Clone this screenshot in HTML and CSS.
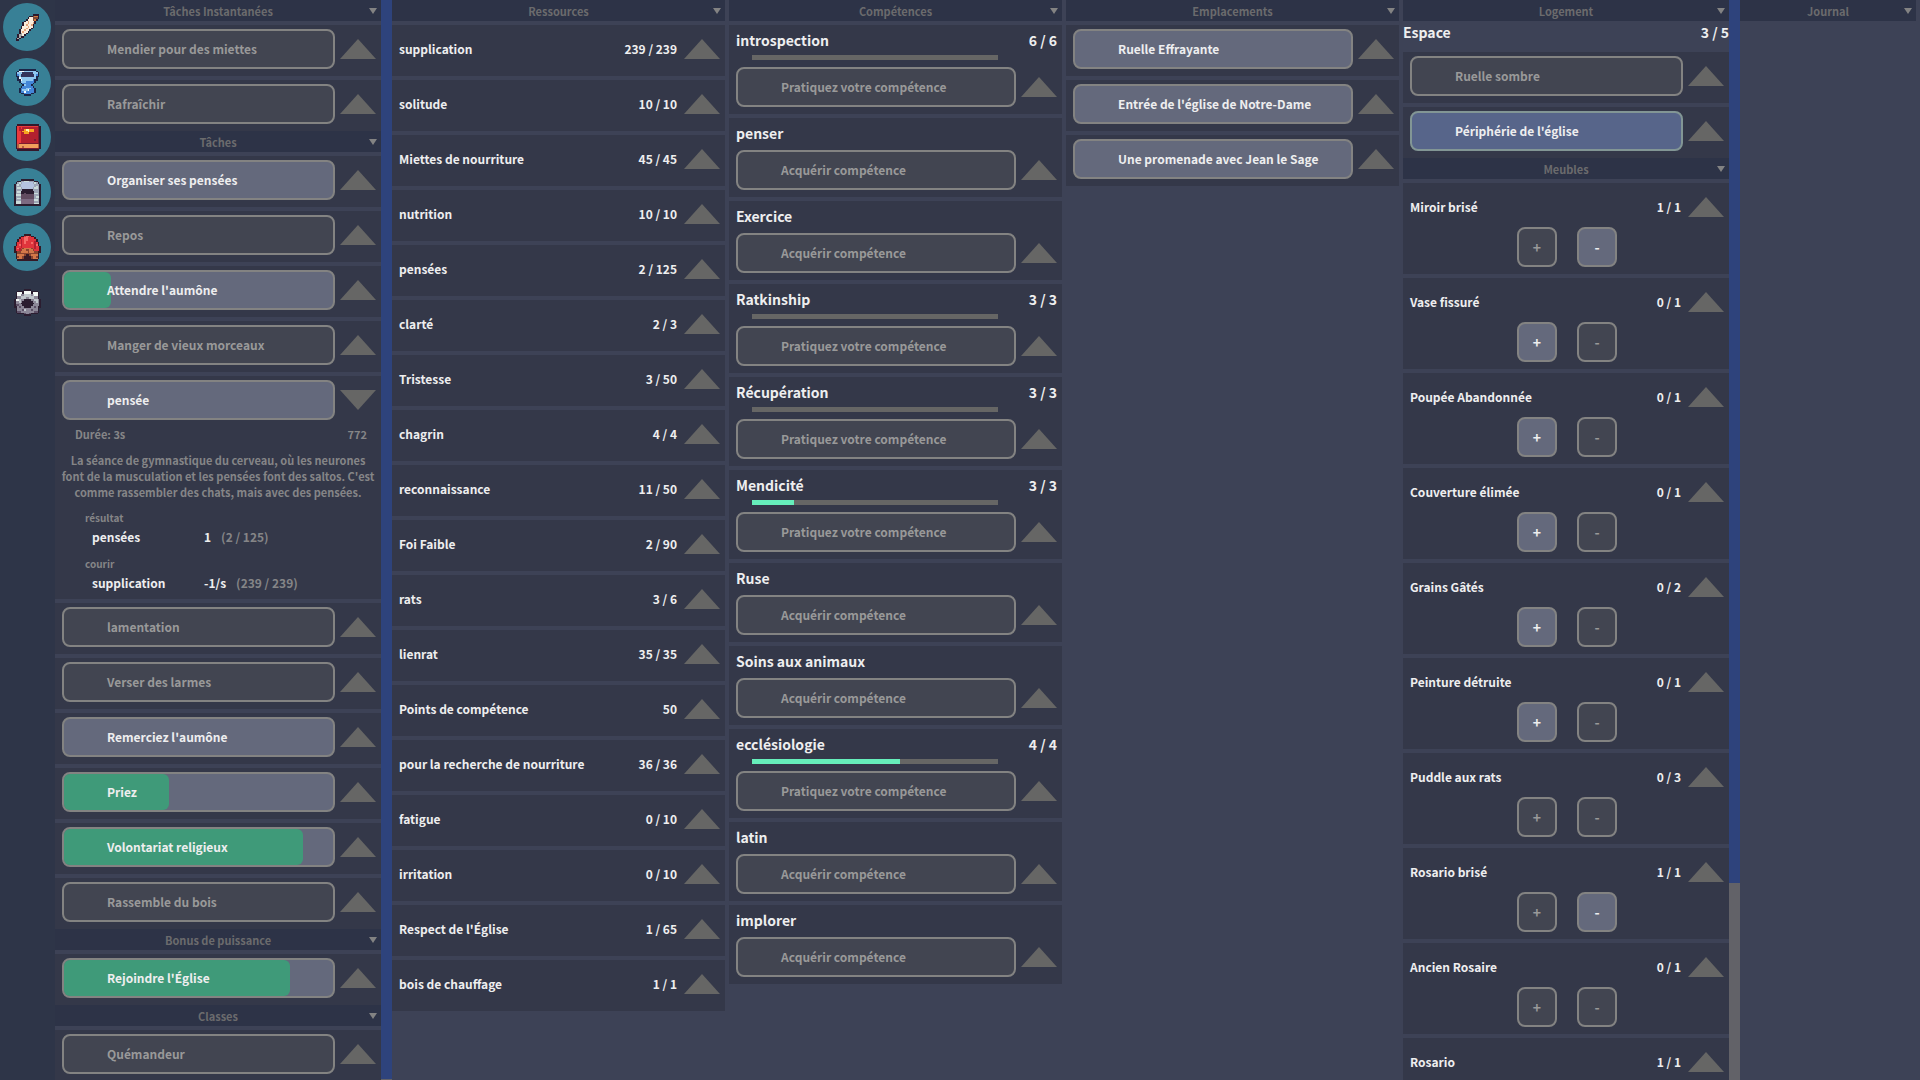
FILE: index.html
```html
<!DOCTYPE html>
<html lang="fr">
<head>
    <meta charset="UTF-8">
    <title>Theory of Magic</title>
    <link rel="stylesheet" href="styles.css">
</head>
<body>

    <!-- MENU -->
    <nav class="menu">
        <button class="menu-btn active" aria-label="Tâches">
            <svg viewBox="0 -0.5 16 16">
                <path stroke="#2b1a2e" d="M11 0h4M9 1h2M14 1h1M8 2h1M14 2h1M7 3h1M13 3h1M6 4h1M12 4h1M5 5h1M12 5h1M5 6h1M11 6h1M4 7h1M11 7h1M4 8h1M10 8h1M3 9h1M9 9h1M3 10h1M8 10h1M3 11h1M7 11h1M2 12h1M6 12h1M2 13h1M4 13h2M1 14h1M3 14h1M1 15h2"/>
                <path stroke="#fbeedd" d="M9 2h2M8 3h3M7 4h1M9 4h3M6 5h2M9 5h3M6 6h1M8 6h3M5 7h3M9 7h2M5 8h2M8 8h2M4 9h2M7 9h2M4 10h1M6 10h2M5 11h2M5 12h1"/>
                <path stroke="#e5a57c" d="M8 4h1M8 5h1M11 5h1M7 6h1M10 6h1M8 7h1M7 8h1M6 9h1M5 10h1"/>
                <path stroke="#7a4a3d" d="M11 1h1M11 2h3M11 3h1"/>
                <path stroke="#d47b3a" d="M12 1h2M12 3h1"/>
                <path stroke="#a9aaa6" d="M4 11h1M3 12h2M3 13h1M2 14h1"/>
            </svg>
        </button>
        <button class="menu-btn active" aria-label="Ressources">
            <svg viewBox="0 -0.5 16 16">
                <path stroke="#1d2547" d="M3 0h10M2 1h1M13 1h1M1 2h1M14 2h1M1 3h1M14 3h1M1 4h2M13 4h2M2 5h1M13 5h1M2 6h2M12 6h2M3 7h1M12 7h1M4 8h1M11 8h1M5 9h1M10 9h1M4 10h1M11 10h1M3 11h1M12 11h1M3 12h1M12 12h1M3 13h1M12 13h1M4 14h2M10 14h2M6 15h4"/>
                <path stroke="#33345c" d="M5 2h6M4 3h8M4 4h8"/>
                <path stroke="#8fc7f0" d="M6 1h7M2 2h3M11 2h3M3 3h1M12 3h1M3 4h1M12 4h1M4 5h9M5 6h6M4 7h3M6 9h1M7 11h3M5 12h3"/>
                <path stroke="#4486d8" d="M2 3h1M13 3h1M11 6h1M7 7h5M5 8h6M7 9h3M5 10h6M4 11h3M10 11h2M4 12h1M9 12h3M4 13h8M6 14h4"/>
                <path stroke="#f2fbff" d="M3 1h3M3 5h1M4 6h1M8 12h1M6 13h1"/>
            </svg>
        </button>
        <button class="menu-btn active" aria-label="Compétences">
            <svg viewBox="0 -0.5 16 16">
                <path stroke="#35182b" d="M2 0h13M1 1h1M15 1h1M1 2h1M15 2h1M1 3h1M15 3h1M1 4h1M15 4h1M1 5h1M15 5h1M1 6h1M15 6h1M1 7h1M15 7h1M1 8h1M15 8h1M1 9h1M15 9h1M1 10h1M15 10h1M1 11h1M15 11h1M1 12h1M15 12h1M1 13h1M15 13h1M1 14h1M15 14h1M2 15h13"/>
                <path stroke="#b3202f" d="M3 2h11M3 3h11M3 4h11M3 5h11M3 6h11M3 7h11M3 8h11M3 9h11M3 10h11M3 11h11"/>
                <path stroke="#ea3a3c" d="M2 1h12M2 2h1M2 3h1M2 4h2M2 5h2M2 6h2M2 7h2M2 8h2M2 9h2M2 10h2M2 11h1M4 2h1"/>
                <path stroke="#7c1c31" d="M14 1h1M14 2h1M14 3h1M14 4h1M14 5h1M14 6h1M14 7h1M14 8h1M12 9h1M14 9h1M14 10h1M3 11h12M2 14h13"/>
                <path stroke="#f7a620" d="M6 3h6M5 4h3M9 4h3M6 5h3"/>
                <path stroke="#fff3b0" d="M7 3h2M8 4h1"/>
                <path stroke="#f0a05c" d="M3 12h11M3 13h11"/>
                <path stroke="#b4603f" d="M2 12h1M2 13h1M14 12h1M14 13h1M5 13h1"/>
            </svg>
        </button>
        <button class="menu-btn active" aria-label="Emplacements">
            <svg viewBox="0 -0.5 16 16">
                <path stroke="#2b1d30" d="M4 0h8M2 1h2M12 1h2M1 2h1M14 2h1M0 3h1M15 3h1M0 4h1M15 4h1M0 5h1M15 5h1M0 6h1M5 6h6M15 6h1M0 7h1M4 7h8M15 7h1M0 8h1M4 8h2M7 8h5M15 8h1M0 9h1M15 9h1M0 10h1M15 10h1M0 11h1M15 11h1M0 12h1M15 12h1M0 13h1M15 13h1M0 14h1M15 14h1M0 15h16"/>
                <path stroke="#9ea6b6" d="M4 1h8M2 2h3M11 2h3M1 3h3M12 3h3M1 4h3M12 4h3M1 5h4M11 5h4M1 6h4M11 6h4M1 7h3M12 7h3M1 8h3M12 8h3M1 9h3M12 9h3M1 10h3M12 10h3M1 11h3M12 11h3M1 12h3M12 12h3M1 13h3M12 13h3M1 14h3M12 14h3"/>
                <path stroke="#b5c3e0" d="M5 2h6M4 3h8M4 4h8M5 5h6"/>
                <path stroke="#cbdcda" d="M3 2h1M12 2h1M2 3h1M13 4h1M2 5h2M6 1h3M12 5h2M2 7h2M12 8h2M1 9h3M13 10h2M2 11h2M12 12h2M1 13h3M12 14h3M1 14h3"/>
                <path stroke="#624b60" d="M6 8h1M4 9h8M4 10h8M4 11h8"/>
                <path stroke="#7d6a82" d="M4 12h8M4 13h8M4 14h8"/>
            </svg>
        </button>
        <button class="menu-btn active" aria-label="Logement">
            <svg viewBox="0 -0.5 16 16">
                <path stroke="#351a26" d="M6 0h4M4 1h2M10 1h2M3 2h1M12 2h1M2 3h1M13 3h1M2 4h1M13 4h1M1 5h1M14 5h1M1 6h1M14 6h1M0 7h1M15 7h1M0 8h1M15 8h1M0 9h1M15 9h1M0 10h2M14 10h2M1 11h1M14 11h1M1 12h1M7 12h2M14 12h1M1 13h1M6 13h4M14 13h1M1 14h1M6 14h4M14 14h1M2 15h12"/>
                <path stroke="#e0343c" d="M6 1h4M4 2h8M3 3h10M3 4h10M2 5h12M2 6h12M1 7h14M1 8h4M11 8h4M1 9h3M12 9h3"/>
                <path stroke="#f56a67" d="M7 1h2M6 2h2M6 3h2M6 4h1M6 5h1M10 5h1M3 6h1M13 6h1M2 8h1"/>
                <path stroke="#b3202f" d="M4 3h1M4 4h1M12 4h1M4 5h1M12 5h1M4 6h1M12 6h1M4 7h1M12 7h1M3 8h1M12 8h1M3 9h1"/>
                <path stroke="#8a4530" d="M5 8h6M4 9h8M2 10h12M2 11h12M2 12h5M9 12h5M2 13h4M10 13h4M2 14h4M10 14h4"/>
                <path stroke="#d47849" d="M6 8h4M5 9h2M9 9h2M4 10h4M9 10h3M2 12h4M10 12h4M3 13h2M11 13h2M2 14h3M11 14h3"/>
            </svg>
        </button>
        <button class="menu-btn" aria-label="Options">
            <svg viewBox="0 -0.5 16 16">
                <path stroke="#2b1d30" d="M6 0h4M2 1h4M10 1h4M1 2h1M5 2h1M10 2h1M14 2h1M1 3h1M14 3h1M1 4h1M14 4h1M1 5h1M14 5h1M0 6h1M6 6h4M15 6h1M0 7h1M5 7h6M15 7h1M0 8h1M4 8h8M15 8h1M0 9h1M5 9h6M15 9h1M0 10h2M6 10h4M14 10h2M1 11h1M14 11h1M1 12h1M14 12h1M1 13h1M14 13h1M2 14h4M10 14h4M6 15h4"/>
                <path stroke="#8c8797" d="M2 2h3M11 2h3M2 3h12M2 4h12M2 5h12M1 6h5M10 6h5M1 7h4M11 7h4M1 8h3M12 8h3M1 9h4M11 9h4M2 10h4M10 10h4M2 11h12M2 12h12M2 13h12M6 14h4"/>
                <path stroke="#f4f8f6" d="M6 1h4M6 2h4M2 2h3M11 2h3M1 6h2M2 3h2M12 3h2"/>
                <path stroke="#bfc5cb" d="M4 4h2M6 3h4M11 3h1M6 4h5M11 4h1M4 5h3M9 5h3M3 6h1M12 6h2M3 7h1M13 7h1M6 12h1"/>
                <path stroke="#5c4f66" d="M3 10h1M12 10h1M5 12h1M10 12h1M2 13h2M12 13h2M1 9h2M6 14h1M9 14h1"/>
            </svg>
        </button>
    </nav>

    <!-- TÂCHES -->
    <section class="col">
        <div class="panel">
            <h2 class="header"><span>Tâches Instantanées</span><i></i></h2>
            <div class="card"><div class="line"><button class="action" disabled>Mendier pour des miettes</button><button class="arrow" aria-label="Détails"></button></div></div>
            <div class="card"><div class="line"><button class="action" disabled>Rafraîchir</button><button class="arrow" aria-label="Détails"></button></div></div>

            <h2 class="header"><span>Tâches</span><i></i></h2>
            <div class="card"><div class="line"><button class="action">Organiser ses pensées</button><button class="arrow" aria-label="Détails"></button></div></div>
            <div class="card"><div class="line"><button class="action" disabled>Repos</button><button class="arrow" aria-label="Détails"></button></div></div>
            <div class="card"><div class="line"><button class="action"><span class="fill" style="width: 17.5%"></span><span class="label">Attendre l'aumône</span></button><button class="arrow" aria-label="Détails"></button></div></div>
            <div class="card"><div class="line"><button class="action" disabled>Manger de vieux morceaux</button><button class="arrow" aria-label="Détails"></button></div></div>
            <div class="card">
                <div class="line"><button class="action">pensée</button><button class="arrow open" aria-label="Détails"></button></div>
                <div class="duration"><span>Durée: 3s</span><span>772</span></div>
                <p class="description">La séance de gymnastique du cerveau, où les neurones font de la musculation et les pensées font des saltos. C'est comme rassembler des chats, mais avec des pensées.</p>
                <div class="effect">
                    <h3>résultat</h3>
                    <div class="effect-line"><span class="effect-name">pensées</span><span>1</span><span class="muted">(2 / 125)</span></div>
                </div>
                <div class="effect">
                    <h3>courir</h3>
                    <div class="effect-line"><span class="effect-name">supplication</span><span>-1/s</span><span class="muted">(239 / 239)</span></div>
                </div>
            </div>
            <div class="card"><div class="line"><button class="action" disabled>lamentation</button><button class="arrow" aria-label="Détails"></button></div></div>
            <div class="card"><div class="line"><button class="action" disabled>Verser des larmes</button><button class="arrow" aria-label="Détails"></button></div></div>
            <div class="card"><div class="line"><button class="action">Remerciez l'aumône</button><button class="arrow" aria-label="Détails"></button></div></div>
            <div class="card"><div class="line"><button class="action"><span class="fill" style="width: 39%"></span><span class="label">Priez</span></button><button class="arrow" aria-label="Détails"></button></div></div>
            <div class="card"><div class="line"><button class="action"><span class="fill" style="width: 89%"></span><span class="label">Volontariat religieux</span></button><button class="arrow" aria-label="Détails"></button></div></div>
            <div class="card"><div class="line"><button class="action" disabled>Rassemble du bois</button><button class="arrow" aria-label="Détails"></button></div></div>

            <h2 class="header"><span>Bonus de puissance</span><i></i></h2>
            <div class="card"><div class="line"><button class="action"><span class="fill" style="width: 84%"></span><span class="label">Rejoindre l'Église</span></button><button class="arrow" aria-label="Détails"></button></div></div>

            <h2 class="header"><span>Classes</span><i></i></h2>
            <div class="card"><div class="line"><button class="action" disabled>Quémandeur</button><button class="arrow" aria-label="Détails"></button></div></div>
        </div>
        <div class="scrollbar"><div class="thumb" style="height: 99.9%"></div></div>
    </section>

    <!-- RESSOURCES -->
    <section class="col spaced">
        <div class="panel">
            <h2 class="header"><span>Ressources</span><i></i></h2>
            <div class="card"><div class="line"><span class="name">supplication</span><span class="value">239 / 239</span><button class="arrow" aria-label="Détails"></button></div></div>
            <div class="card"><div class="line"><span class="name">solitude</span><span class="value">10 / 10</span><button class="arrow" aria-label="Détails"></button></div></div>
            <div class="card"><div class="line"><span class="name">Miettes de nourriture</span><span class="value">45 / 45</span><button class="arrow" aria-label="Détails"></button></div></div>
            <div class="card"><div class="line"><span class="name">nutrition</span><span class="value">10 / 10</span><button class="arrow" aria-label="Détails"></button></div></div>
            <div class="card"><div class="line"><span class="name">pensées</span><span class="value">2 / 125</span><button class="arrow" aria-label="Détails"></button></div></div>
            <div class="card"><div class="line"><span class="name">clarté</span><span class="value">2 / 3</span><button class="arrow" aria-label="Détails"></button></div></div>
            <div class="card"><div class="line"><span class="name">Tristesse</span><span class="value">3 / 50</span><button class="arrow" aria-label="Détails"></button></div></div>
            <div class="card"><div class="line"><span class="name">chagrin</span><span class="value">4 / 4</span><button class="arrow" aria-label="Détails"></button></div></div>
            <div class="card"><div class="line"><span class="name">reconnaissance</span><span class="value">11 / 50</span><button class="arrow" aria-label="Détails"></button></div></div>
            <div class="card"><div class="line"><span class="name">Foi Faible</span><span class="value">2 / 90</span><button class="arrow" aria-label="Détails"></button></div></div>
            <div class="card"><div class="line"><span class="name">rats</span><span class="value">3 / 6</span><button class="arrow" aria-label="Détails"></button></div></div>
            <div class="card"><div class="line"><span class="name">lienrat</span><span class="value">35 / 35</span><button class="arrow" aria-label="Détails"></button></div></div>
            <div class="card"><div class="line"><span class="name">Points de compétence</span><span class="value">50</span><button class="arrow" aria-label="Détails"></button></div></div>
            <div class="card"><div class="line"><span class="name">pour la recherche de nourriture</span><span class="value">36 / 36</span><button class="arrow" aria-label="Détails"></button></div></div>
            <div class="card"><div class="line"><span class="name">fatigue</span><span class="value">0 / 10</span><button class="arrow" aria-label="Détails"></button></div></div>
            <div class="card"><div class="line"><span class="name">irritation</span><span class="value">0 / 10</span><button class="arrow" aria-label="Détails"></button></div></div>
            <div class="card"><div class="line"><span class="name">Respect de l'Église</span><span class="value">1 / 65</span><button class="arrow" aria-label="Détails"></button></div></div>
            <div class="card"><div class="line"><span class="name">bois de chauffage</span><span class="value">1 / 1</span><button class="arrow" aria-label="Détails"></button></div></div>
        </div>
    </section>

    <!-- COMPÉTENCES -->
    <section class="col spaced">
        <div class="panel">
            <h2 class="header"><span>Compétences</span><i></i></h2>
            <div class="card skill">
                <h3 class="skill-title"><span>introspection</span><span>6 / 6</span></h3>
                <div class="bar"></div>
                <div class="line"><button class="action" disabled>Pratiquez votre compétence</button><button class="arrow" aria-label="Détails"></button></div>
            </div>
            <div class="card skill">
                <h3 class="skill-title"><span>penser</span></h3>
                <div class="line"><button class="action" disabled>Acquérir compétence</button><button class="arrow" aria-label="Détails"></button></div>
            </div>
            <div class="card skill">
                <h3 class="skill-title"><span>Exercice</span></h3>
                <div class="line"><button class="action" disabled>Acquérir compétence</button><button class="arrow" aria-label="Détails"></button></div>
            </div>
            <div class="card skill">
                <h3 class="skill-title"><span>Ratkinship</span><span>3 / 3</span></h3>
                <div class="bar"></div>
                <div class="line"><button class="action" disabled>Pratiquez votre compétence</button><button class="arrow" aria-label="Détails"></button></div>
            </div>
            <div class="card skill">
                <h3 class="skill-title"><span>Récupération</span><span>3 / 3</span></h3>
                <div class="bar"></div>
                <div class="line"><button class="action" disabled>Pratiquez votre compétence</button><button class="arrow" aria-label="Détails"></button></div>
            </div>
            <div class="card skill">
                <h3 class="skill-title"><span>Mendicité</span><span>3 / 3</span></h3>
                <div class="bar"><div style="width: 17%"></div></div>
                <div class="line"><button class="action" disabled>Pratiquez votre compétence</button><button class="arrow" aria-label="Détails"></button></div>
            </div>
            <div class="card skill">
                <h3 class="skill-title"><span>Ruse</span></h3>
                <div class="line"><button class="action" disabled>Acquérir compétence</button><button class="arrow" aria-label="Détails"></button></div>
            </div>
            <div class="card skill">
                <h3 class="skill-title"><span>Soins aux animaux</span></h3>
                <div class="line"><button class="action" disabled>Acquérir compétence</button><button class="arrow" aria-label="Détails"></button></div>
            </div>
            <div class="card skill">
                <h3 class="skill-title"><span>ecclésiologie</span><span>4 / 4</span></h3>
                <div class="bar"><div style="width: 60%"></div></div>
                <div class="line"><button class="action" disabled>Pratiquez votre compétence</button><button class="arrow" aria-label="Détails"></button></div>
            </div>
            <div class="card skill">
                <h3 class="skill-title"><span>latin</span></h3>
                <div class="line"><button class="action" disabled>Acquérir compétence</button><button class="arrow" aria-label="Détails"></button></div>
            </div>
            <div class="card skill">
                <h3 class="skill-title"><span>implorer</span></h3>
                <div class="line"><button class="action" disabled>Acquérir compétence</button><button class="arrow" aria-label="Détails"></button></div>
            </div>
        </div>
    </section>

    <!-- EMPLACEMENTS -->
    <section class="col spaced">
        <div class="panel">
            <h2 class="header"><span>Emplacements</span><i></i></h2>
            <div class="card"><div class="line"><button class="action">Ruelle Effrayante</button><button class="arrow" aria-label="Détails"></button></div></div>
            <div class="card"><div class="line"><button class="action">Entrée de l'église de Notre-Dame</button><button class="arrow" aria-label="Détails"></button></div></div>
            <div class="card"><div class="line"><button class="action">Une promenade avec Jean le Sage</button><button class="arrow" aria-label="Détails"></button></div></div>
        </div>
    </section>

    <!-- LOGEMENT -->
    <section class="col">
        <div class="panel">
            <h2 class="header"><span>Logement</span><i></i></h2>
            <div class="space"><span>Espace</span><span>3 / 5</span></div>
            <div class="card"><div class="line"><button class="action" disabled>Ruelle sombre</button><button class="arrow" aria-label="Détails"></button></div></div>
            <div class="card"><div class="line"><button class="action selected">Périphérie de l'église</button><button class="arrow" aria-label="Détails"></button></div></div>

            <h2 class="header"><span>Meubles</span><i></i></h2>
            <div class="card">
                <div class="line"><span class="name">Miroir brisé</span><span class="value">1 / 1</span><button class="arrow" aria-label="Détails"></button></div>
                <div class="amount"><button class="step" disabled>+</button><button class="step">-</button></div>
            </div>
            <div class="card">
                <div class="line"><span class="name">Vase fissuré</span><span class="value">0 / 1</span><button class="arrow" aria-label="Détails"></button></div>
                <div class="amount"><button class="step">+</button><button class="step" disabled>-</button></div>
            </div>
            <div class="card">
                <div class="line"><span class="name">Poupée Abandonnée</span><span class="value">0 / 1</span><button class="arrow" aria-label="Détails"></button></div>
                <div class="amount"><button class="step">+</button><button class="step" disabled>-</button></div>
            </div>
            <div class="card">
                <div class="line"><span class="name">Couverture élimée</span><span class="value">0 / 1</span><button class="arrow" aria-label="Détails"></button></div>
                <div class="amount"><button class="step">+</button><button class="step" disabled>-</button></div>
            </div>
            <div class="card">
                <div class="line"><span class="name">Grains Gâtés</span><span class="value">0 / 2</span><button class="arrow" aria-label="Détails"></button></div>
                <div class="amount"><button class="step">+</button><button class="step" disabled>-</button></div>
            </div>
            <div class="card">
                <div class="line"><span class="name">Peinture détruite</span><span class="value">0 / 1</span><button class="arrow" aria-label="Détails"></button></div>
                <div class="amount"><button class="step">+</button><button class="step" disabled>-</button></div>
            </div>
            <div class="card">
                <div class="line"><span class="name">Puddle aux rats</span><span class="value">0 / 3</span><button class="arrow" aria-label="Détails"></button></div>
                <div class="amount"><button class="step" disabled>+</button><button class="step" disabled>-</button></div>
            </div>
            <div class="card">
                <div class="line"><span class="name">Rosario brisé</span><span class="value">1 / 1</span><button class="arrow" aria-label="Détails"></button></div>
                <div class="amount"><button class="step" disabled>+</button><button class="step">-</button></div>
            </div>
            <div class="card">
                <div class="line"><span class="name">Ancien Rosaire</span><span class="value">0 / 1</span><button class="arrow" aria-label="Détails"></button></div>
                <div class="amount"><button class="step" disabled>+</button><button class="step" disabled>-</button></div>
            </div>
            <div class="card">
                <div class="line"><span class="name">Rosario</span><span class="value">1 / 1</span><button class="arrow" aria-label="Détails"></button></div>
            </div>
        </div>
        <div class="scrollbar"><div class="thumb" style="height: 81.8%"></div></div>
    </section>

    <!-- JOURNAL -->
    <section class="col spaced">
        <div class="panel">
            <h2 class="header"><span>Journal</span><i></i></h2>
        </div>
    </section>

</body>
</html>
```
FILE: styles.css
```css
* {
    box-sizing: border-box;
}

body {
    margin: 0;
    height: 100vh;
    display: grid;
    grid-template-columns: 55px repeat(5, 1fr) 180px;
    overflow: hidden;
    background-color: #3d4256;
    color: #eeeeef;
    font-family: "Noto Sans CJK SC", "Noto Sans", sans-serif;
    font-size: 12px;
    font-weight: bold;
    line-height: 20px;
}

button {
    font: inherit;
    color: inherit;
    margin: 0;
    padding: 0;
    border: none;
    background: none;
    cursor: pointer;
}

h2, h3, p {
    margin: 0;
    font-weight: bold;
}

/* Menu */
.menu {
    display: flex;
    flex-direction: column;
    align-items: center;
    gap: 7px;
    padding: 3px 4px 0 3px;
    background-color: #2e3548;
}

.menu-btn {
    display: flex;
    align-items: center;
    justify-content: center;
    width: 48px;
    height: 48px;
    border-radius: 50%;
}

.menu-btn.active {
    background-color: #388096;
}

.menu-btn svg {
    width: 27px;
    height: 27px;
    shape-rendering: crispEdges;
}

/* Colonnes */
.col {
    display: flex;
    min-width: 0;
    min-height: 0;
}

.col.spaced {
    padding-right: 4px;
}

.panel {
    flex: 1;
    min-width: 0;
    overflow: hidden;
}

.scrollbar {
    width: 11px;
    background-color: #626268;
}

.thumb {
    background-color: #2e437c;
}

.header {
    display: flex;
    align-items: center;
    height: 21px;
    padding: 0 4px 0 12px;
    background-color: #2d3347;
    color: #6b6b6d;
    font-size: 11px;
    text-align: center;
}

.header span {
    flex: 1;
}

.header i {
    border: 4px solid transparent;
    border-top: 6px solid #838383;
    border-bottom: none;
}

/* Lignes */
.card {
    margin-top: 4px;
    padding: 4px 5px 7px 7px;
    background-color: #343849;
}

.line {
    display: flex;
    align-items: center;
    gap: 5px;
    height: 40px;
}

.name {
    flex: 1;
}

.value {
    margin-right: 2px;
}

.arrow {
    width: 36px;
    height: 20px;
    background-color: #666665;
    clip-path: polygon(50% 0, 100% 100%, 0 100%);
}

.arrow.open {
    clip-path: polygon(0 0, 100% 0, 50% 100%);
}

.action {
    position: relative;
    flex: 1;
    height: 40px;
    padding-left: 43px;
    border: 2px solid #838382;
    border-radius: 8px;
    background-color: #64697c;
    text-align: left;
}

.action:disabled,
.step:disabled {
    background-color: #424551;
    color: #999999;
}

.action.selected {
    background-color: #57658a;
    border-color: #829695;
}

.fill {
    position: absolute;
    top: 0;
    left: 0;
    height: 100%;
    border-radius: 6px;
    background-color: #3f9a79;
}

.label {
    position: relative;
}

/* Détails d'une tâche */
.duration {
    display: flex;
    justify-content: space-between;
    margin-top: 4px;
    padding: 0 9px 0 13px;
    color: #858587;
    font-size: 11px;
}

.description {
    margin: 8px -5px 0 -7px;
    padding: 0 5px;
    color: #858587;
    font-size: 11px;
    line-height: 16px;
    text-align: center;
}

.effect {
    margin-top: 8px;
    padding-left: 23px;
}

.effect h3 {
    color: #858587;
    font-size: 10px;
}

.effect-line {
    display: flex;
    gap: 10px;
    padding-left: 7px;
    line-height: 18px;
}

.effect-name {
    width: 102px;
}

.muted {
    color: #858587;
}

/* Compétences */
.skill {
    padding-top: 0;
}

.skill-title {
    display: flex;
    justify-content: space-between;
    margin-bottom: 2px;
    font-size: 14px;
    line-height: 30px;
}

.bar {
    height: 5px;
    margin: -2px 59px 7px 16px;
    background-color: #666665;
}

.bar div {
    height: 100%;
    background-color: #66eebb;
}

/* Logement */
.space {
    display: flex;
    justify-content: space-between;
    height: 27px;
    font-size: 14px;
    line-height: 22px;
}

.amount {
    display: flex;
    justify-content: center;
    gap: 20px;
}

.step {
    width: 40px;
    height: 40px;
    border: 2px solid #838382;
    border-radius: 8px;
    background-color: #64697c;
    font-size: 14px;
}
```
